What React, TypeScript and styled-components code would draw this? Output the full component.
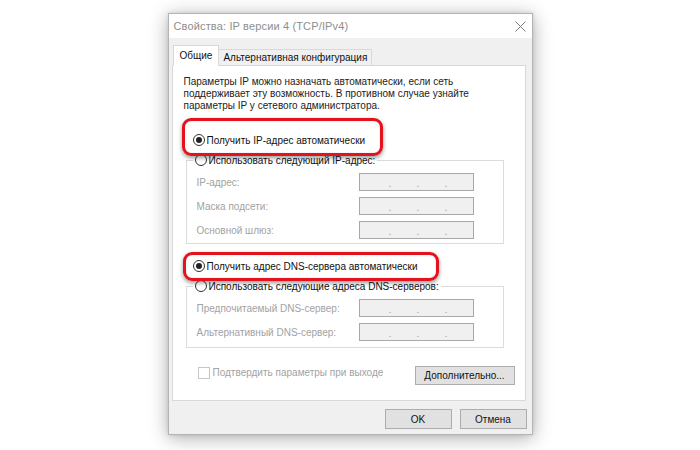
import React from "react";
import styled, { createGlobalStyle } from "styled-components";

const GlobalStyle = createGlobalStyle`
  html, body { margin: 0; padding: 0; background: #ffffff; }
  body { font-family: "Liberation Sans", Arial, sans-serif; }
`;

const Page = styled.div`
  display: flex;
  justify-content: center;
  padding-top: 13px;
  width: 700px;
  height: 450px;
  box-sizing: border-box;
`;

const Window = styled.div`
  width: 365px;
  height: 422px;
  box-sizing: border-box;
  border: 1px solid #b4b4b4;
  background: #f0f0f0;
  box-shadow: 0 3px 18px rgba(0, 0, 0, 0.32), 0 0 4px rgba(0, 0, 0, 0.12);
  display: flex;
  flex-direction: column;
`;

const TitleBar = styled.div`
  height: 24px;
  background: #ffffff;
  display: flex;
  align-items: center;
  justify-content: space-between;
  padding: 0 6px 0 5px;
`;

const Title = styled.span`
  font-size: 11px;
  color: #8e8e8e;
  letter-spacing: 0.15px;
`;

const Body = styled.div`
  flex: 1;
  display: flex;
  flex-direction: column;
  padding: 7px 6px 0 3px;
`;

const TabStrip = styled.div`
  display: flex;
  align-items: flex-end;
  padding-left: 1px;
  margin-bottom: -1px;
  position: relative;
  z-index: 1;
`;

const Tab = styled.div<{ $active?: boolean }>`
  font-size: 10px;
  color: #111;
  box-sizing: border-box;
  height: ${(p) => (p.$active ? "21px" : "17px")};
  padding: ${(p) => (p.$active ? "0 6px" : "0 4px")};
  display: flex;
  align-items: center;
  background: ${(p) => (p.$active ? "#ffffff" : "#f0f0f0")};
  border: 1px solid #d9d9d9;
  border-bottom: ${(p) => (p.$active ? "1px solid #ffffff" : "1px solid #d9d9d9")};
  margin-left: ${(p) => (p.$active ? "0" : "-1px")};
`;

const Panel = styled.div`
  height: 336px;
  box-sizing: border-box;
  background: #ffffff;
  border: 1px solid #d9d9d9;
  padding: 10px 21px 0 11px;
  display: flex;
  flex-direction: column;
  font-size: 10px;
`;

const Description = styled.p`
  margin: 0;
  line-height: 12px;
  color: #222;
`;

const HighlightWrap = styled.div<{ $mt: number }>`
  position: relative;
  margin-top: ${(p) => p.$mt}px;
  margin-left: 9px;
`;

const Ring = styled.div<{ $top: number; $left: number; $w: number; $h: number }>`
  position: absolute;
  top: ${(p) => p.$top}px;
  left: ${(p) => p.$left}px;
  width: ${(p) => p.$w}px;
  height: ${(p) => p.$h}px;
  box-sizing: border-box;
  border: 3px solid #e4121c;
  border-radius: 9px;
  box-shadow: 0 2px 4px rgba(0, 0, 0, 0.4), inset 0 0 2px rgba(0, 0, 0, 0.15);
  pointer-events: none;
`;

const RadioRow = styled.label`
  display: flex;
  align-items: center;
  height: 14px;
  gap: 2px;
  color: #111;
  width: fit-content;
`;

const RadioCircle = styled.span<{ $checked?: boolean }>`
  width: 12px;
  height: 12px;
  box-sizing: border-box;
  border-radius: 50%;
  border: 1px solid #333;
  background: #fff;
  display: flex;
  align-items: center;
  justify-content: center;
  &::after {
    content: "";
    width: 6px;
    height: 6px;
    border-radius: 50%;
    background: ${(p) => (p.$checked ? "#222" : "transparent")};
  }
`;

const GroupBox = styled.div<{ $mt: number; $pb: number }>`
  margin-top: ${(p) => p.$mt}px;
  margin-left: 2px;
  border: 1px solid #dcdcdc;
  padding: 0 29px ${(p) => p.$pb}px 10px;
  display: flex;
  flex-direction: column;
`;

const Legend = styled.div`
  margin: -8px 0 0 -4px;
  padding: 0 2px;
  background: #fff;
  width: fit-content;
  margin-bottom: 6px;
`;

const FieldRow = styled.div`
  display: flex;
  align-items: center;
  justify-content: space-between;
  height: 18px;
  margin-bottom: 6px;
  &:last-child { margin-bottom: 0; }
`;

const FieldLabel = styled.span`
  color: #a2a2a2;
`;

const IpBox = styled.div`
  width: 115px;
  height: 18px;
  box-sizing: border-box;
  background: #f0f0f0;
  border: 1px solid #a8a8a8;
  display: flex;
  align-items: center;
  padding: 2px 0 0 29px;
  gap: 25px;
  color: #9a9a9a;
  font-size: 10px;
`;

const Dot = styled.span`
  width: 3px;
  text-align: center;
`;

const Footer = styled.div`
  margin-top: 18px;
  margin-left: 14px;
  margin-right: -11px;
  display: flex;
  justify-content: space-between;
  align-items: flex-start;
`;

const CheckRow = styled.label`
  display: flex;
  align-items: center;
  gap: 3px;
  color: #a2a2a2;
  height: 13px;
`;

const CheckBox = styled.span`
  width: 12px;
  height: 12px;
  box-sizing: border-box;
  border: 1px solid #c6c6c6;
  background: #fff;
`;

const Button = styled.button<{ $w: number }>`
  width: ${(p) => p.$w}px;
  height: ${(p) => (p.$w > 80 ? 19 : 20)}px;
  box-sizing: border-box;
  background: #e1e1e1;
  border: 1px solid #adadad;
  font-family: "Liberation Sans", Arial, sans-serif;
  font-size: 10px;
  color: #111;
  padding: 0;
`;

const ButtonBar = styled.div`
  display: flex;
  justify-content: flex-end;
  gap: 8px;
  margin-top: 8px;
  margin-right: -1px;
`;

const IpField = () => (
  <IpBox>
    <Dot>.</Dot>
    <Dot>.</Dot>
    <Dot>.</Dot>
  </IpBox>
);

export default function App() {
  return (
    <>
      <GlobalStyle />
      <Page>
        <Window>
          <TitleBar>
            <Title>Свойства: IP версии 4 (TCP/IPv4)</Title>
            <svg width="11" height="11" viewBox="0 0 11 11">
              <path d="M0.5 0.5 L10.5 10.5 M10.5 0.5 L0.5 10.5" stroke="#7a7a7a" strokeWidth="1" fill="none" />
            </svg>
          </TitleBar>
          <Body>
            <TabStrip>
              <Tab $active>Общие</Tab>
              <Tab>Альтернативная конфигурация</Tab>
            </TabStrip>
            <Panel>
              <Description>
                Параметры IP можно назначать автоматически, если сеть
                <br />
                поддерживает эту возможность. В противном случае узнайте
                <br />
                параметры IP у сетевого администратора.
              </Description>

              <HighlightWrap $mt={21}>
                <Ring $top={-15} $left={-11} $w={201} $h={38} />
                <RadioRow>
                  <RadioCircle $checked />
                  Получить IP-адрес автоматически
                </RadioRow>
              </HighlightWrap>

              <GroupBox $mt={13} $pb={4}>
                <Legend>
                  <RadioRow>
                    <RadioCircle />
                    Использовать следующий IP-адрес:
                  </RadioRow>
                </Legend>
                <FieldRow>
                  <FieldLabel>IP-адрес:</FieldLabel>
                  <IpField />
                </FieldRow>
                <FieldRow>
                  <FieldLabel>Маска подсети:</FieldLabel>
                  <IpField />
                </FieldRow>
                <FieldRow>
                  <FieldLabel>Основной шлюз:</FieldLabel>
                  <IpField />
                </FieldRow>
              </GroupBox>

              <HighlightWrap $mt={15}>
                <Ring $top={-7} $left={-10} $w={256} $h={29} />
                <RadioRow>
                  <RadioCircle $checked />
                  Получить адрес DNS-сервера автоматически
                </RadioRow>
              </HighlightWrap>

              <GroupBox $mt={13} $pb={6}>
                <Legend>
                  <RadioRow>
                    <RadioCircle />
                    Использовать следующие адреса DNS-серверов:
                  </RadioRow>
                </Legend>
                <FieldRow>
                  <FieldLabel>Предпочитаемый DNS-сервер:</FieldLabel>
                  <IpField />
                </FieldRow>
                <FieldRow>
                  <FieldLabel>Альтернативный DNS-сервер:</FieldLabel>
                  <IpField />
                </FieldRow>
              </GroupBox>

              <Footer>
                <CheckRow>
                  <CheckBox />
                  Подтвердить параметры при выходе
                </CheckRow>
                <Button $w={100}>Дополнительно...</Button>
              </Footer>
            </Panel>
            <ButtonBar>
              <Button $w={67}>OK</Button>
              <Button $w={67}>Отмена</Button>
            </ButtonBar>
          </Body>
        </Window>
      </Page>
    </>
  );
}
